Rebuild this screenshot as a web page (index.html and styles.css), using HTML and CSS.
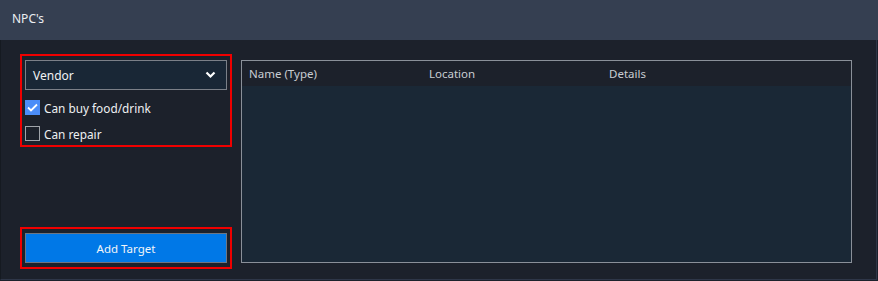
FILE: index.html
```html
<!DOCTYPE html>
<html lang="en">
<head>
    <meta charset="UTF-8">
    <meta name="viewport" content="width=device-width, initial-scale=1.0">
    <title>NPC's</title>
    <link rel="stylesheet" href="styles.css">
</head>
<body>
    <div class="window">
        <div class="title-bar">NPC's</div>
        <div class="content">
            <div class="side">
                <div class="highlight filters">
                    <div class="select">
                        <span>Vendor</span>
                        <svg width="11" height="8" viewBox="0 0 11 8">
                            <polyline points="1.5,1.5 5.5,5.5 9.5,1.5" fill="none" stroke="#ffffff" stroke-width="2.2"/>
                        </svg>
                    </div>
                    <label class="check-row">
                        <span class="check checked">
                            <svg width="11" height="9" viewBox="0 0 11 9">
                                <polyline points="1,4.5 4,7.5 10,1.5" fill="none" stroke="#ffffff" stroke-width="1.8"/>
                            </svg>
                        </span>
                        Can buy food/drink
                    </label>
                    <label class="check-row">
                        <span class="check"></span>
                        Can repair
                    </label>
                </div>
                <div class="highlight">
                    <button class="add-btn">Add Target</button>
                </div>
            </div>
            <div class="table">
                <div class="table-head">
                    <div class="col">Name (Type)</div>
                    <div class="col">Location</div>
                    <div class="col">Details</div>
                </div>
                <div class="table-body"></div>
            </div>
        </div>
    </div>
</body>
</html>
```

FILE: styles.css
```css
body {
    margin: 0;
    padding: 0;
    background-color: #1c212b;
    font-family: "Noto Sans", "Open Sans", sans-serif;
    font-size: 12px;
    color: #e6e8eb;
}
.window {
    width: 878px;
    height: 281px;
    display: flex;
    flex-direction: column;
}
.title-bar {
    height: 40px;
    line-height: 38px;
    padding-left: 12px;
    background-color: #353f51;
    color: #eceef1;
    box-sizing: border-box;
}
.content {
    flex: 1;
    display: flex;
    padding: 14px 24px 10px 19px;
    border-left: 1px solid #151a21;
    border-right: 1px solid #2e3648;
    border-bottom: 1px solid #2e3648;
    margin-right: 1px;
    margin-bottom: 1px;
}
.side {
    width: 212px;
    display: flex;
    flex-direction: column;
    justify-content: space-between;
}
.highlight {
    border: 2px solid #f00000;
    padding: 4px 3px;
}
.filters {
    padding-bottom: 4px;
}
.select {
    height: 30px;
    box-sizing: border-box;
    border: 1px solid #7b8088;
    background-color: #192736;
    display: flex;
    align-items: center;
    justify-content: space-between;
    padding: 0 10px 0 7px;
    font-size: 12px;
    color: #f0f2f4;
}
.check-row {
    display: flex;
    align-items: center;
    gap: 4px;
    height: 15px;
    margin-top: 10px;
    font-size: 11.8px;
    color: #eef0f2;
}
.check-row + .check-row {
    margin-top: 11px;
}
.check {
    width: 15px;
    height: 15px;
    box-sizing: border-box;
    border: 1px solid #a0a4aa;
    display: flex;
    align-items: center;
    justify-content: center;
}
.check.checked {
    background-color: #4b8df8;
    border-color: #4b8df8;
}
.add-btn {
    display: block;
    width: 100%;
    height: 30px;
    border: 1px solid #6d7683;
    background-color: #0078e7;
    color: #f2f5f8;
    font-family: "Noto Sans", "Open Sans", sans-serif;
    font-size: 11.5px;
    padding: 0;
}
.table {
    margin-left: 9px;
    margin-top: 6px;
    margin-bottom: 6px;
    width: 611px;
    border: 1px solid #8a9099;
    box-sizing: border-box;
    display: flex;
    flex-direction: column;
}
.table-head {
    height: 25px;
    display: flex;
    align-items: center;
    background-color: #1c212b;
    color: #c9cdd3;
    font-size: 11.5px;
}
.col {
    width: 180px;
    box-sizing: border-box;
    padding-left: 7px;
}
.table-body {
    flex: 1;
    background-color: #1a2836;
}
```
